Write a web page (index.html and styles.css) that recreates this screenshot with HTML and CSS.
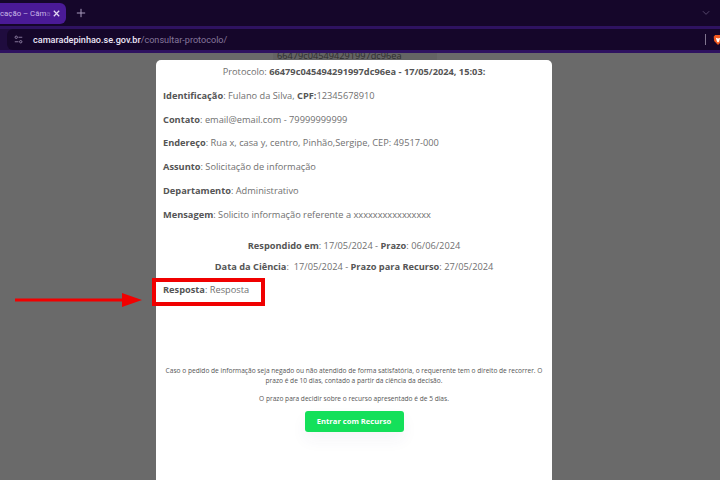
FILE: index.html
```html
<!DOCTYPE html>
<html lang="pt-BR">
<head>
<meta charset="utf-8">
<title>Consultar protocolo</title>
<link rel="stylesheet" href="styles.css">
</head>
<body>
<div class="browser">
  <header class="tabstrip">
    <div class="tab">
      <span class="tab-title">cação – Câm<i>a</i></span>
      <svg class="tab-close" viewBox="0 0 10 10"><path d="M2 2l6 6M8 2l-6 6"/></svg>
    </div>
    <svg class="new-tab" viewBox="0 0 12 12"><path d="M6 1v10M1 6h10"/></svg>
    <svg class="tab-menu" viewBox="0 0 10 6"><path d="M1 1l3.500 3.500L8 1"/></svg>
  </header>
  <div class="toolbar">
    <div class="omnibox">
      <svg class="tune" viewBox="0 0 12 12"><circle cx="3" cy="3" r="1.600"/><path d="M6 3h5M1 9h5"/><circle cx="9" cy="9" r="1.600"/></svg>
      <span class="url"><b>camaradepinhao.se.gov.br</b>/consultar-protocolo/</span>
      <span class="divider"></span>
      <svg class="brave" viewBox="0 0 14 16"><path fill="#f0581f" d="M3 1h8l2 2.500-.6 6L7 15 1.600 9.500 1 3.500z"/><path fill="#fff" d="M4 5l3 1 3-1-1.500 5L7 11.500 5.500 10z"/></svg>
    </div>
  </div>
  <main class="page">
    <div class="behind"><p>66479c045494291997dc96ea</p></div>
    <section class="modal">
      <p class="line center">Protocolo: <b>66479c045494291997dc96ea - 17/05/2024, 15:03:</b></p>
      <p class="line"><b>Identificação</b>: Fulano da Silva, <b>CPF:</b>12345678910</p>
      <p class="line"><b>Contato</b>: email@email.com - 79999999999</p>
      <p class="line"><b>Endereço</b>: Rua x, casa y, centro, Pinhão,Sergipe, CEP: 49517-000</p>
      <p class="line"><b>Assunto</b>: Solicitação de informação</p>
      <p class="line"><b>Departamento</b>: Administrativo</p>
      <p class="line"><b>Mensagem</b>: Solicito informação referente a xxxxxxxxxxxxxxxx</p>
      <p class="line center resp"><b>Respondido em</b>: 17/05/2024 - <b>Prazo</b>: 06/06/2024</p>
      <p class="line center ciencia"><b>Data da Ciência</b>:&nbsp; 17/05/2024 - <b>Prazo para Recurso</b>: 27/05/2024</p>
      <p class="line"><b>Resposta</b>: Resposta</p>
      <div class="legal">
        <p>Caso o pedido de informação seja negado ou não atendido de forma satisfatória, o requerente tem o direito de recorrer. O prazo é de 10 dias, contado a partir da ciência da decisão.</p>
        <p class="legal-2">O prazo para decidir sobre o recurso apresentado é de 5 dias.</p>
      </div>
      <button class="cta" type="button">Entrar com Recurso</button>
    </section>
    <div class="highlight"></div>
    <svg class="arrow" viewBox="0 0 127 14"><path d="M0 5.500h107V0l20 7-20 7V8.500H0z"/></svg>
  </main>
</div>
</body>
</html>
```
FILE: styles.css
```css
* { box-sizing: border-box; }
html, body { margin: 0; height: 100%; overflow: hidden; }
body { font-family: "Open Sans", "Noto Sans", sans-serif; background: #6a6a6a; }
p { margin: 0; }

.browser { width: 720px; height: 480px; display: flex; flex-direction: column; }

.tabstrip {
  height: 26px;
  background: #15062a;
  display: flex;
  align-items: flex-start;
  gap: 10px;
  padding-top: 3px;
  flex: none;
}
.tab {
  width: 66px;
  height: 21px;
  background: #4a1a96;
  border-radius: 0 6px 6px 0;
  display: flex;
  align-items: center;
  justify-content: space-between;
  padding-right: 5px;
}
.tab-title { font: 7.800px "Roboto", "Liberation Sans", sans-serif; color: #c9b8e8; white-space: nowrap; }
.tab-title i { font-style: normal; opacity: .4; }
.tab-close { width: 9px; height: 9px; flex: none; fill: none; stroke: #e3daf3; stroke-width: 1.400; }
.new-tab { width: 10px; height: 10px; margin-top: 5px; fill: none; stroke: #a99bbd; stroke-width: 1.200; }
.tab-menu { width: 9px; height: 6px; margin: 7px 9px 0 auto; fill: none; stroke: #5b4d70; stroke-width: 1; }

.toolbar {
  height: 27px;
  flex: none;
  background: #1f0c3e;
  border-top: 3px solid #2e1260;
  border-bottom: 3px solid #2e1260;
  padding-left: 7px;
  overflow: hidden;
}
.omnibox {
  height: 21px;
  display: flex;
  align-items: center;
  gap: 10px;
  padding-left: 7px;
  background: #15062a;
  border-radius: 6px 0 0 6px;
}
.tune { width: 9px; height: 9px; flex: none; fill: none; stroke: #a99bbd; stroke-width: 1; }
.url { flex: 1; font: 9.100px "Roboto", "Liberation Sans", sans-serif; color: #85779c; white-space: nowrap; }
.url b { font-weight: 500; color: #ece6f7; }
.divider { width: 1px; height: 11px; background: #80758f; margin-right: -3px; flex: none; }
.brave { width: 10px; height: 12px; flex: none; margin-right: -3px; }

.page { flex: 1; position: relative; min-height: 0; overflow: hidden; }
.behind {
  position: absolute;
  left: 273px;
  top: 0;
  width: 164px;
  height: 7px;
  padding-left: 4px;
  background: #646464;
  font-size: 9.200px;
  line-height: 5px;
  color: #2e2e2e;
  overflow: hidden;
}

.modal {
  position: relative;
  width: 396px;
  height: 440px;
  margin-top: 7px;
  margin-left: 156px;
  background: #fff;
  border-radius: 5px 5px 0 0;
  padding: 5px 7px 0;
  font-size: 9.250px;
  color: #707070;
  display: flex;
  flex-direction: column;
}
.modal b { font-weight: 700; color: #555; }
.line { line-height: 14px; margin-bottom: 9.800px; }
.center { text-align: center; }
.resp { margin-top: 7px; margin-bottom: 7.500px; }
.ciencia { margin-bottom: 9px; }
.legal { margin-top: 59px; font-size: 6.600px; line-height: 10px; text-align: center; color: #555; }
.legal-2 { margin-top: 8px; }
.cta {
  align-self: center;
  margin-top: 7px;
  width: 99px;
  height: 21px;
  padding: 0;
  border: 0;
  border-radius: 3px;
  background: #14e05a;
  color: #fff;
  font: 700 7.600px "Open Sans", sans-serif;
  box-shadow: 0 8px 16px rgba(60, 60, 120, .05);
}

.highlight {
  position: absolute;
  left: 152px;
  top: 225px;
  width: 113px;
  height: 28px;
  border: 4px solid #f00000;
}
.arrow { position: absolute; left: 15px; top: 240px; width: 127px; height: 14px; fill: #f00000; }
```
